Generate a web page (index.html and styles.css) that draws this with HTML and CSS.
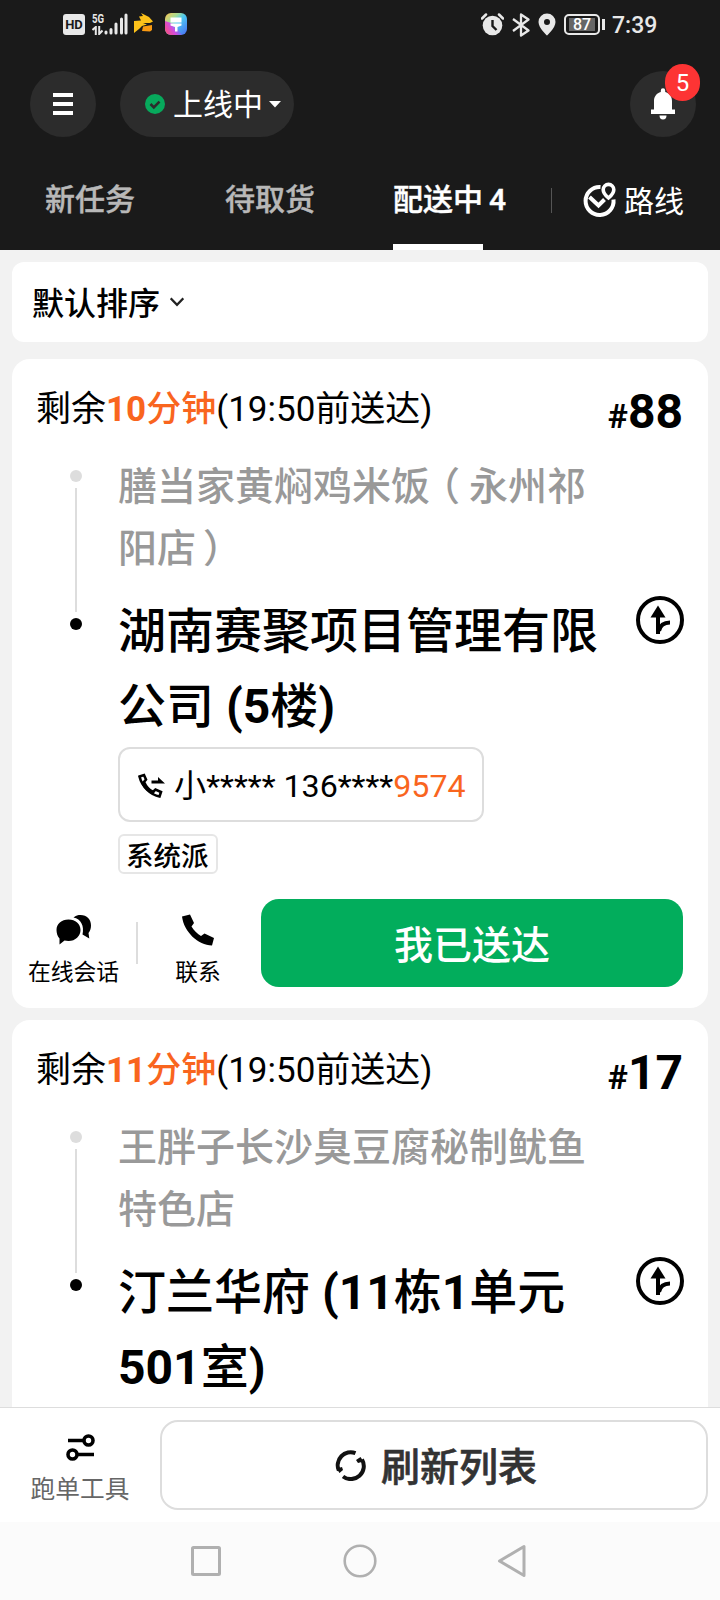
FILE: index.html
```html
<!DOCTYPE html>
<html lang="zh-CN">
<head>
<meta charset="utf-8">
<title>配送中</title>
<link rel="stylesheet" href="styles.css">
</head>
<body>
<div class="screen">
  <header class="top">
    <div class="status">
      <div class="status-left">
        <span class="hd">HD</span>
        <span class="net"><span class="net-5g">5G</span>
          <svg width="11" height="9" viewBox="0 0 11 9" fill="none" stroke="#e8e8e8" stroke-width="2"><path d="M3.8 9V1L.5 4M7.2 0v8l3.3-3.5"/></svg>
        </span>
        <svg class="signal" width="24" height="22" viewBox="0 0 24 22" stroke="#e8e8e8" stroke-width="3" stroke-linecap="round"><path d="M2 20v-1M7 20v-3.500M12 20v-9M17.500 20V6M22 20V2"/></svg>
        <svg class="roo" width="19" height="20" viewBox="0 0 19 20"><path fill="#fdc21a" d="M0 8l7-.5L5 3.500 9 3 7 0l8 4 4 4.500-3 1.500H9l4 1.500-5 1.500-3 3-5 4z"/><path fill="#fa9a12" d="M9 13.500l9-1.500v5l-2 1.500-8-.5z"/></svg>
        <svg class="brush" width="22" height="22" viewBox="0 0 22 22">
          <defs><linearGradient id="g1" x1="0" y1="0" x2="1" y2="1"><stop offset="0" stop-color="#ffc14d"/><stop offset=".3" stop-color="#a8dc92"/><stop offset=".5" stop-color="#4cc8f0"/><stop offset="1" stop-color="#4a6cf5"/></linearGradient><linearGradient id="g2" x1="1" y1=".4" x2="0" y2=".9"><stop offset=".1" stop-color="#9a4df0" stop-opacity="0"/><stop offset=".5" stop-color="#d04ce0"/><stop offset="1" stop-color="#ff5070"/></linearGradient></defs>
          <rect width="22" height="22" rx="6" fill="url(#g1)"/><path d="M0 8l9 3 8 11H6a6 6 0 0 1-6-6z" fill="url(#g2)"/>
          <path fill="#fff" d="M5.500 4.500h11v5h-11zM5.500 10.500h11v2l-4 1.500v4.500h-2.500V14l-4.500-1.500z"/></svg>
      </div>
      <div class="status-right">
        <svg width="23" height="23" viewBox="0 0 23 23"><circle cx="11.500" cy="12.500" r="9.800" fill="#e8e8e8"/><path d="M1 5.500L5 1.500M22 5.500L18 1.500" stroke="#e8e8e8" stroke-width="2.500" stroke-linecap="round"/><path d="M11.500 7v6l4 4" fill="none" stroke="#1a1a1a" stroke-width="2.400"/></svg>
        <svg width="18" height="24" viewBox="0 0 18 24" fill="none" stroke="#e8e8e8" stroke-width="2.300" stroke-linejoin="round"><path d="M1 6l15.500 11.500L9 22.500v-21L16.500 6.500 1 18"/></svg>
        <svg width="18" height="23" viewBox="0 0 18 23"><path fill="#e8e8e8" fill-rule="evenodd" d="M9 .5a8.500 8.500 0 0 0-8.500 8.500C.5 15 9 22.500 9 22.500S17.500 15 17.500 9A8.500 8.500 0 0 0 9 .5zm0 5.500a3 3 0 1 1 0 6 3 3 0 0 1 0-6z"/></svg>
        <span class="battery"><span class="battery-body"><span class="battery-fill">87</span></span><i class="battery-nub"></i></span>
        <span class="clock">7:39</span>
      </div>
    </div>
    <div class="bar">
      <span class="round"><svg width="20" height="22" viewBox="0 0 20 22" fill="#fff"><path d="M0 0h20v4H0zM0 9h20v4H0zM0 18h20v4H0z"/></svg></span>
      <span class="online">
        <svg width="20" height="20" viewBox="0 0 20 20"><circle cx="10" cy="10" r="10" fill="#07a95c"/><path d="M5.500 10l3.300 3.300 5.700-5.700" fill="none" stroke="#2c2c2c" stroke-width="2.600"/></svg>
        <span class="online-text">上线中</span>
        <svg width="12" height="7" viewBox="0 0 12 7" fill="#fff"><path d="M0 0h12L6 6.500z"/></svg>
      </span>
      <span class="round bell">
        <svg width="24" height="32" viewBox="0 0 24 32" fill="#fff"><path d="M9.800 4V2.500a2.200 2.200 0 0 1 4.400 0V4c4 1 6.800 4.500 6.800 9v8.500h3V26H0v-4.500h3V13c0-4.500 2.800-8 6.800-9zM8.500 27.500h7a3.500 4 0 0 1-7 0z"/></svg>
        <span class="badge">5</span>
      </span>
    </div>
    <nav class="tabs">
      <span class="tab">新任务</span>
      <span class="tab">待取货</span>
      <span class="tab active">配送中<span class="tab-count">4</span></span>
      <i class="tab-sep"></i>
      <span class="route"><svg width="34" height="36" viewBox="0 0 34 36" fill="none" stroke="#fff"><path d="M17.500 5A14 14 0 1 0 30.500 17.500" stroke-width="4"/><path d="M6.500 15l9 8.500 6-6" stroke-width="4"/><path d="M25.500 16c-3.500-3-5.300-5-5.300-8.300a5.300 5.300 0 0 1 10.600 0C30.800 11 29 13 25.500 16z" stroke-width="3.600"/></svg>路线</span>
    </nav>
  </header>

  <main class="list">
    <div class="sort"><span>默认排序</span><svg width="14" height="10" viewBox="0 0 14 10" fill="none" stroke="#222" stroke-width="2.200"><path d="M.7 1.300L7 7.800l6.300-6.500"/></svg></div>

    <section class="card">
      <div class="card-head">
        <div class="eta">剩余<span class="left"><b>10</b>分钟</span>(19:50前送达)</div>
        <div class="no"><span>#</span>88</div>
      </div>
      <div class="trip">
        <div class="rail"><i class="dot"></i><i class="line"></i><i class="dot end"></i></div>
        <div class="places">
          <div class="shop">膳当家黄焖鸡米饭<span class="paren-open">（</span>永州祁<br>阳店<span class="paren-close">）</span></div>
          <div class="dest">湖南赛聚项目管理有限<br>公司 <b>(5</b>楼<b>)</b></div>
          <div class="phone">
            <svg width="29" height="26" viewBox="0 0 29 26"><path d="M2.500 3.500l4.500-1.500 2 4.500-2 2.500c2 4.500 5 8 9 10l2.500-2.500 5.500 2.500-1.500 4.500C14 22 5 14 2.500 3.500z" fill="none" stroke="#000" stroke-width="2.600"/><path d="M5.500 9.500c2.500 5 5.500 8.500 11.500 11" stroke="#000" stroke-width="3" fill="none"/><path d="M14.500 7.500H21V4l7 6.500H14.500z"/></svg>
            <span>小***** 136****<em>9574</em></span>
          </div>
          <div class="tag">系统派</div>
        </div>
        <svg class="navi" width="48" height="48" viewBox="0 0 48 48"><circle cx="24" cy="24" r="22" fill="none" stroke="#000" stroke-width="4"/><path d="M22 9.500l7.500 12H14.500z"/><path d="M22 18v20M23 35c1-5.500 4-8.500 11-8.500" fill="none" stroke="#000" stroke-width="4"/></svg>
      </div>
      <div class="actions">
        <div class="act chat">
          <svg width="36" height="32" viewBox="0 0 36 32"><path d="M12.500 5.500C19.500 5.500 24.500 10 24.500 16s-5 11-12 11c-1.500 0-3-.2-4-.5L3.500 30.500V24.500C1.500 22.500.5 19 .5 16c0-6 5-10.500 12-10.500z"/><path d="M17.500 3.500C20 1.500 22 1 24.500 1 31 1 35 5.500 35 11.500c0 3-1 5.500-2.500 7.500l.8 5.500-6.800-4C28.500 12 25 5 17.500 3.500z"/></svg>
          <span>在线会话</span>
        </div>
        <i class="act-sep"></i>
        <div class="act call">
          <svg width="34" height="32" viewBox="0 0 34 32"><path d="M1 2.500L9 .5l4 8.500-2.500 3.500c2.500 4 6 7.500 9.500 9.500l3.500-2.500 9.500 4.500L31 31.500C17 31 3 18 1 2.500z"/></svg>
          <span>联系</span>
        </div>
        <div class="done">我已送达</div>
      </div>
    </section>

    <section class="card">
      <div class="card-head">
        <div class="eta">剩余<span class="left"><b>11</b>分钟</span>(19:50前送达)</div>
        <div class="no"><span>#</span>17</div>
      </div>
      <div class="trip">
        <div class="rail"><i class="dot"></i><i class="line"></i><i class="dot end"></i></div>
        <div class="places">
          <div class="shop">王胖子长沙臭豆腐秘制鱿鱼<br>特色店</div>
          <div class="dest">汀兰华府 <b>(11</b>栋<b>1</b>单元<br><b>501</b>室<b>)</b></div>
        </div>
        <svg class="navi" width="48" height="48" viewBox="0 0 48 48"><circle cx="24" cy="24" r="22" fill="none" stroke="#000" stroke-width="4"/><path d="M22 9.500l7.500 12H14.500z"/><path d="M22 18v20M23 35c1-5.500 4-8.500 11-8.500" fill="none" stroke="#000" stroke-width="4"/></svg>
      </div>
    </section>
  </main>

  <footer class="dock">
    <div class="tools">
      <svg width="29" height="28" viewBox="0 0 29 28" fill="none" stroke="#000" stroke-width="3.600"><circle cx="22.500" cy="7.500" r="4.500"/><path d="M2 7.500h16M10 21.500h18"/><circle cx="6.500" cy="21.500" r="4.500"/></svg>
      <span>跑单工具</span>
    </div>
    <div class="refresh">
      <svg width="32" height="32" viewBox="0 0 32 32" fill="none" stroke="#111" stroke-width="4"><path d="M4.800 21.500A13 13 0 0 1 21.500 4.200M9 27.500A13 13 0 0 0 28 10.500"/><path d="M2.500 19.500l5.500-1.500 1 3-3.500 3zM29.500 12.500l-5.500 1.500-2-3 4.500-3z" fill="#111" stroke="none"/></svg>
      <span>刷新列表</span>
    </div>
  </footer>
  <div class="sysnav">
    <svg width="32" height="34" viewBox="0 0 32 34"><rect x="2.500" y="3.500" width="27" height="27" rx="1" fill="none" stroke="#b0b0b0" stroke-width="3"/></svg>
    <svg width="34" height="34" viewBox="0 0 34 34"><circle cx="17" cy="17" r="15.300" fill="none" stroke="#b0b0b0" stroke-width="2.600"/></svg>
    <svg width="30" height="34" viewBox="0 0 30 34"><path d="M1.500 17L26 2.500v29z" fill="none" stroke="#b0b0b0" stroke-width="3" stroke-linejoin="round"/></svg>
  </div>
</div>
</body>
</html>
```

FILE: styles.css
```css
* { box-sizing: border-box; }
body {
  margin: 0;
  font-family: Roboto, "Noto Sans CJK SC", sans-serif;
  color: #000;
}
svg { display: block; flex: none; }
i, em { font-style: normal; }

.screen {
  width: 720px;
  height: 1600px;
  display: flex;
  flex-direction: column;
  background: #f2f2f2;
  overflow: hidden;
}

/* header */
.top { flex: none; height: 250px; background: #1a1a1a; color: #fff; }
.status {
  height: 71px;
  padding: 13px 63px 0 63px;
  display: flex;
  justify-content: space-between;
  align-items: flex-start;
}
.status-left, .status-right { display: flex; align-items: flex-start; color: #e8e8e8; }
.hd {
  width: 22px; height: 21px; margin-top: 1px;
  border-radius: 3px; background: #e8e8e8; color: #1a1a1a;
  font-size: 13px; line-height: 22px; font-weight: 700; text-align: center;
}
.net { width: 13px; margin-left: 7px; }
.net-5g { display: block; font-size: 12px; line-height: 12px; font-weight: 700; transform: scaleX(.8); transform-origin: left; }
.net svg { margin-top: 1px; }
.signal { margin-left: -1px; }
.roo { margin-left: 6px; }
.brush { margin-left: 12px; }
.status-right svg { margin-right: 7px; }
.status-right svg + svg { margin-left: 1px; }
.battery { display: flex; align-items: center; margin: 1px 0 0 1px; }
.battery-body { width: 36px; height: 21px; border: 2px solid #e8e8e8; border-radius: 5px; padding: 2px 3px; }
.battery-fill { display: block; width: 26px; height: 13px; background: #666; color: #fff; font-size: 16px; line-height: 14px; font-weight: 500; text-align: center; }
.battery-nub { width: 3px; height: 11px; margin-left: 2px; background: #e8e8e8; }
.clock { width: 45px; margin-left: 7px; font-size: 23px; line-height: 25px; font-weight: 500; white-space: nowrap; }

.bar { display: flex; align-items: center; height: 66px; padding: 0 24px 0 30px; }
.round { position: relative; width: 66px; height: 66px; border-radius: 50%; background: #2c2c2c; display: flex; align-items: center; justify-content: center; }
.online {
  width: 174px; height: 66px; margin-left: 24px; padding-left: 25px;
  border-radius: 33px; background: #2c2c2c;
  display: flex; align-items: center;
}
.online-text { margin: 2px 6px 0 8px; font-size: 30px; line-height: 40px; }
.bell { margin-left: auto; }
.bell svg { margin-top: -1px; }
.badge {
  position: absolute; left: 35px; top: -7px;
  width: 35px; height: 37px; border-radius: 18px;
  background: #fd3434; font-size: 24px; line-height: 39px; text-align: center;
}
.tabs { display: flex; height: 113px; align-items: flex-start; padding: 0 0 0 45px; font-size: 30px; line-height: 34px; }
.tab { width: 90px; height: 113px; padding-top: 46px; margin-right: 90px; color: #b8b8b8; font-weight: 500; -webkit-text-stroke: .4px currentColor; white-space: nowrap; }
.tab + .tab { margin-right: 78px; }
.tab + .tab.active { color: #fff; border-bottom: 6px solid #fff; margin-right: 68px; }
.tab-count { margin-left: 6px; }
.tab-sep { width: 1px; height: 25px; margin-top: 51px; background: #555; }
.route { display: flex; align-items: flex-start; margin: 45px 0 0 31px; line-height: 40px; white-space: nowrap; gap: 7px; }

/* list */
.list { flex: 1; min-height: 0; overflow: hidden; padding: 12px 12px 0; }
.sort {
  height: 80px; margin-bottom: 17px; padding-left: 20px;
  display: flex; align-items: center; gap: 10px;
  border-radius: 12px; background: #fff; font-size: 32px; line-height: 40px; font-weight: 500;
}
.sort span { padding-top: 4px; }
.card { background: #fff; border-radius: 18px; padding: 19px 24px 21px; margin-bottom: 12px; }
.card-head { display: flex; justify-content: space-between; height: 78px; padding-right: 1px; }
.eta { font-size: 35px; line-height: 64px; white-space: nowrap; }
.left { color: #f9651e; font-weight: 500; }
.no { font-size: 48px; line-height: 67px; font-weight: 700; }
.no span { font-size: 34px; }
.trip { display: flex; }
.rail { width: 82px; padding: 14px 0 0 34px; }
.dot { display: block; width: 12px; height: 12px; border-radius: 50%; background: #ddd; }
.line { display: block; width: 2px; height: 124px; margin: 6px 5px; background: #ddd; }
.dot.end { background: #000; }
.places { width: 518px; white-space: nowrap; }
.shop { font-size: 39px; line-height: 62px; color: #999; font-weight: 500; }
/* half-width brackets, spaced so they sit centred in a full cell */
.paren-open, .paren-close { font-feature-settings: "halt"; }
.paren-open { margin: 0 9px 0 10.5px; }
.paren-close { margin-left: 7px; }
.dest { margin-top: 14px; font-size: 48px; line-height: 75px; font-weight: 500; }
.navi { margin: 140px 0 0 auto; }
.phone {
  width: 366px; height: 75px; margin-top: 3px; padding: 2px 0 0 17px;
  display: flex; align-items: center; gap: 8px;
  border: 2px solid #ddd; border-radius: 12px;
  font-size: 32.2px; line-height: 40px;
}
.phone em { color: #f9651e; }
.tag {
  width: 100px; height: 40px; margin-top: 12px; padding-left: 6px;
  border: 2px solid #e6e6e6; border-radius: 6px;
  font-size: 27.5px; line-height: 42px; font-weight: 500;
}
.actions { display: flex; margin-top: 25px; height: 88px; padding-right: 1px; }
.act { display: flex; flex-direction: column; align-items: center; font-size: 22.8px; line-height: 30px; white-space: nowrap; padding-top: 15px; }
.act span { margin-top: 12px; }
.chat { width: 93px; margin-left: -9px; }
.act-sep { width: 2px; height: 42px; margin: 23px 0 0 16px; background: #ddd; }
.call { width: 60px; margin-left: 30px; }
.done {
  width: 422px; height: 88px; margin-left: auto; border-radius: 18px;
  background: #02ad5c; color: #fff; font-size: 39px; line-height: 95px; font-weight: 500; text-align: center;
}

/* dock */
.dock { flex: none; height: 115px; display: flex; padding: 12px 12px 0 0; background: #fff; border-top: 1px solid #ddd; }
.tools { width: 160px; display: flex; flex-direction: column; align-items: center; font-size: 24.7px; line-height: 32px; color: #666; padding-top: 13px; }
.tools span { margin-top: 13px; }
.refresh {
  flex: 1; height: 90px; display: flex; align-items: center; justify-content: center; gap: 15px; padding-left: 3px;
  border: 2px solid #ddd; border-radius: 18px; background: #fff;
  color: #333; font-size: 39px; line-height: 50px; font-weight: 500;
}
.refresh span { padding-top: 5px; -webkit-text-stroke: .6px #333; }
.sysnav { flex: none; height: 78px; padding: 0 192px 0 190px; display: flex; justify-content: space-between; align-items: center; background: #fbfbfb; }
```
